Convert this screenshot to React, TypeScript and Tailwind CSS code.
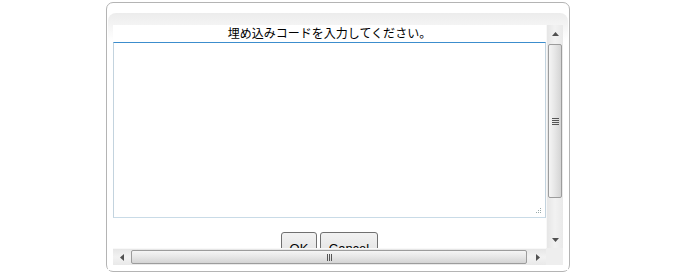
import React from "react"

function Arrow({ dir }: { dir: "up" | "down" | "left" | "right" }) {
  const pts: Record<string, string> = {
    up: "0,4 7,4 3.5,0",
    down: "0,0 7,0 3.5,4",
    left: "4,0 4,7 0,3.5",
    right: "0,0 0,7 4,3.5",
  }
  const vertical = dir === "up" || dir === "down"
  return (
    <svg width={vertical ? 7 : 4} height={vertical ? 4 : 7} viewBox={vertical ? "0 0 7 4" : "0 0 4 7"}>
      <polygon points={pts[dir]} fill="#505050" />
    </svg>
  )
}

function VScrollbar() {
  return (
    <div className="flex h-full w-[17px] flex-col bg-gradient-to-r from-[#e6e6e6] via-[#f2f2f2] to-[#e9e9e9] border-l border-[#f8f8f8]">
      <div className="flex h-[17px] items-center justify-center">
        <Arrow dir="up" />
      </div>
      <div className="mt-[2px] flex h-[154px] items-center justify-center rounded-[2px] border border-[#9c9c9c] mx-px bg-gradient-to-r from-[#f5f5f5] via-[#e6e6e6] to-[#d4d4d4]">
        <div className="flex flex-col gap-[1px]">
          <div className="h-px w-[7px] bg-[#555]" />
          <div className="h-px w-[7px] bg-[#555]" />
          <div className="h-px w-[7px] bg-[#555]" />
          <div className="h-px w-[7px] bg-[#555]" />
        </div>
      </div>
      <div className="flex-1" />
      <div className="flex h-[17px] items-center justify-center">
        <Arrow dir="down" />
      </div>
    </div>
  )
}

function HScrollbar() {
  return (
    <div className="flex h-[17px] w-full items-stretch bg-gradient-to-b from-[#e6e6e6] via-[#f2f2f2] to-[#e9e9e9] border-t border-[#f8f8f8]">
      <div className="flex w-[17px] items-center justify-center">
        <Arrow dir="left" />
      </div>
      <div className="my-px ml-px flex w-[396px] items-center justify-center rounded-[2px] border border-[#9c9c9c] bg-gradient-to-b from-[#f5f5f5] via-[#e6e6e6] to-[#d4d4d4]">
        <div className="flex gap-[1px]">
          <div className="h-[7px] w-px bg-[#555]" />
          <div className="h-[7px] w-px bg-[#555]" />
          <div className="h-[7px] w-px bg-[#555]" />
        </div>
      </div>
      <div className="flex-1" />
      <div className="flex w-[17px] items-center justify-center">
        <Arrow dir="right" />
      </div>
    </div>
  )
}

export default function App() {
  return (
    <div className="h-[273px] w-[675px] overflow-hidden bg-white font-['Noto_Sans_CJK_JP',sans-serif] text-black">
      <div className="ml-[106px] pt-[2px]">
        <div className="h-[270px] w-[464px] rounded-[7px] border border-[#b4b4b4] bg-white px-px pt-[10px]">
          <div className="h-[257px] rounded-t-[8px] bg-gradient-to-b from-[#ececec] to-white to-[28px] pl-[5px] pt-[12px]">
            <div className="grid w-[450px] grid-cols-[433px_17px] grid-rows-[223px_17px]">
              <div className="overflow-hidden bg-white">
                <div className="flex h-[17px] items-center justify-center pb-[1px] text-[12px] leading-none">
                  埋め込みコードを入力してください。
                </div>
                <div className="relative h-[176px] border border-t-[#3c8dcd] border-x-[#c3d3de] border-b-[#c9dbe7] bg-white">
                  <div className="absolute right-[4px] bottom-[4px] grid grid-cols-3 gap-px">
                    <span />
                    <span />
                    <span className="h-px w-px bg-[#9aa]" />
                    <span />
                    <span className="h-px w-px bg-[#9aa]" />
                    <span className="h-px w-px bg-[#9aa]" />
                    <span className="h-px w-px bg-[#9aa]" />
                    <span className="h-px w-px bg-[#9aa]" />
                    <span className="h-px w-px bg-[#9aa]" />
                  </div>
                </div>
                <div className="mt-[14px] flex justify-center gap-[3px] font-['Liberation_Sans',sans-serif] text-[13px]">
                  <button className="h-[32px] w-[36px] rounded-[3px] border border-[#707070] bg-gradient-to-b from-[#f2f2f2] to-[#dddddd] pt-[2px]">
                    OK
                  </button>
                  <button className="h-[32px] w-[58px] rounded-[3px] border border-[#707070] bg-gradient-to-b from-[#f2f2f2] to-[#dddddd] pt-[2px]">
                    Cancel
                  </button>
                </div>
              </div>
              <VScrollbar />
              <HScrollbar />
              <div className="bg-[#eeeeee]" />
            </div>
          </div>
        </div>
      </div>
    </div>
  )
}
